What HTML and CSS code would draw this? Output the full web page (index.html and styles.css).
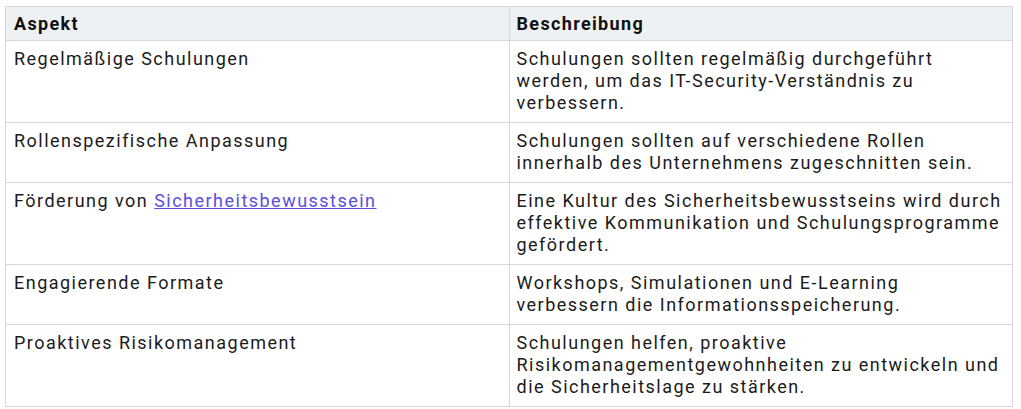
FILE: index.html
```html
<!DOCTYPE html>
<html lang="de">
<head>
<meta charset="utf-8">
<link rel="stylesheet" href="styles.css">
</head>
<body>
<div class="wrap">
<table class="tbl">
<thead>
<tr><th>Aspekt</th><th>Beschreibung</th></tr>
</thead>
<tbody>
<tr><td>Regelmäßige Schulungen</td><td>Schulungen sollten regelmäßig durchgeführt werden, um das IT-Security-Verständnis zu verbessern.</td></tr>
<tr><td>Rollenspezifische Anpassung</td><td>Schulungen sollten auf verschiedene Rollen innerhalb des Unternehmens zugeschnitten sein.</td></tr>
<tr><td>Förderung von <a class="link" href="#">Sicherheitsbewusstsein</a></td><td>Eine Kultur des Sicherheitsbewusstseins wird durch effektive Kommunikation und Schulungsprogramme gefördert.</td></tr>
<tr><td>Engagierende Formate</td><td>Workshops, Simulationen und E-Learning verbessern die Informationsspeicherung.</td></tr>
<tr><td>Proaktives Risikomanagement</td><td>Schulungen helfen, proaktive Risikomanagementgewohnheiten zu entwickeln und die Sicherheitslage zu stärken.</td></tr>
</tbody>
</table>
</div>
</body>
</html>
```
FILE: styles.css
```css
html, body {
  margin: 0;
  padding: 0;
  background: #ffffff;
}
.wrap {
  padding: 6px 8px 0 5px;
}
.tbl {
  width: 100%;
  border-collapse: collapse;
  table-layout: fixed;
  font-family: Roboto, "Liberation Sans", sans-serif;
  font-size: 18px;
  letter-spacing: 1.48px;
  line-height: 22px;
  color: #1b1b1b;
}
.tbl th, .tbl td {
  border: 1px solid #d3d7de;
  text-align: left;
  vertical-align: top;
  padding: 7px 8px 8px 8px;
}
.tbl td + td, .tbl th + th {
  padding-left: 7px;
}
.tbl th {
  background: #eef1f4;
  font-weight: 700;
  letter-spacing: 1.35px;
  padding-top: 6px;
  padding-bottom: 5px;
  color: #111111;
}
.link {
  color: #5a4fe0;
  text-decoration: underline;
}
```
